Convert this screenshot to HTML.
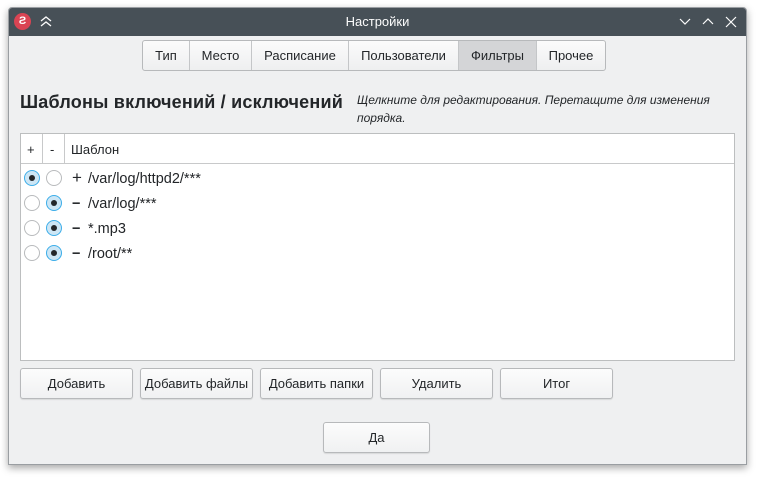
<!DOCTYPE html>
<html><head><meta charset="utf-8"><style>
*{box-sizing:border-box;margin:0;padding:0}
body{width:761px;height:480px;background:#fff;font-family:"Liberation Sans","DejaVu Sans",sans-serif;font-size:13px;color:#232629;position:relative;overflow:hidden}
.win{position:absolute;left:8px;top:7px;width:739px;height:458px;background:#eff0f1;border:1px solid #9a9ea2;box-shadow:0 3px 8px rgba(0,0,0,.35);border-radius:4px 4px 0 0;overflow:hidden}
.tb{position:absolute;left:0;top:0;width:100%;height:28px;background:#475057;color:#fcfcfc;text-align:center;line-height:27px;font-size:13px}
.abs{position:absolute}
.tabs{position:absolute;left:133px;top:32px;height:31px;display:flex;border:1px solid #b7b9bb;border-radius:3px;background:linear-gradient(#fbfbfb,#eeeff0)}
.tabs div{border-left:1px solid #c4c6c8;text-align:center;line-height:29px;font-size:13px}
.tabs div:first-child{border-left:none}
.tabs .sel{background:#d4d5d7}
h1{position:absolute;left:11px;top:84px;font-size:18px;font-weight:bold;color:#232629;letter-spacing:0.2px;white-space:nowrap}
.hint{position:absolute;left:348px;top:83px;font-size:12px;font-style:italic;line-height:18px;width:380px}
.tbl{position:absolute;left:11px;top:125px;width:715px;height:228px;background:#fff;border:1px solid #bcbebf}
.hdr{position:absolute;left:0;top:0;width:100%;height:30px;border-bottom:1px solid #c8c9ca}
.vl{position:absolute;top:0;height:30px;width:1px;background:#c8c9ca}
.rad{position:absolute;width:16px;height:16px;border-radius:50%;border:1px solid #b9bbbd;background:#fff}
.rad.on{background:#cde6f5;border-color:#3daee9}
.rad.on:after{content:"";position:absolute;left:4px;top:4px;width:6px;height:6px;border-radius:50%;background:#232629}
.row{position:absolute;left:51px;font-size:14.5px}
.sg{display:inline-block;width:16px;font-weight:normal}
.btn{position:absolute;height:31px;border:1px solid #b7b9bb;border-radius:3px;background:linear-gradient(#fcfcfc,#f0f1f2);text-align:center;line-height:29px;font-size:13px;box-shadow:0 1px 1px rgba(0,0,0,.1)}
</style></head><body>
<div class="win">
<div class="tb">Настройки
<div class="abs" style="left:5px;top:5px;width:17px;height:17px;border-radius:50%;background:#da4453;color:#fff;font-size:11px;line-height:17px;font-weight:bold">Ƨ</div>
<svg class="abs" style="left:31px;top:7px" width="12" height="12"><path d="M1 6l5-4 5 4M1 11l5-4 5 4" stroke="#fcfcfc" fill="none" stroke-width="1.3"/></svg>
<svg class="abs" style="left:670px;top:8px" width="60" height="12"><path d="M1 3l5 5 5-5M24 8l5-5 5 5M47 1l10 10M57 1l-10 10" stroke="#fcfcfc" fill="none" stroke-width="1.2"/></svg>
</div>
<div class="tabs"><div style="width:46px">Тип</div><div style="width:62px">Место</div><div style="width:97px">Расписание</div><div style="width:110px">Пользователи</div><div class="sel" style="width:78px">Фильтры</div><div style="width:69px">Прочее</div></div>
<h1>Шаблоны включений / исключений</h1>
<div class="hint">Щелкните для редактирования. Перетащите для изменения порядка.</div>
<div class="tbl">
<div class="hdr"><div class="vl" style="left:21px"></div><div class="vl" style="left:43px"></div>
<span class="abs" style="left:6px;top:8px">+</span><span class="abs" style="left:29px;top:8px">-</span><span class="abs" style="left:50px;top:8px">Шаблон</span></div>
<div class="rad on" style="left:3px;top:36px"></div><div class="rad" style="left:25px;top:36px"></div><div class="row" style="top:37px"><span class="sg" style="font-size:17px;line-height:14px">+</span>/var/log/httpd2/***</div>
<div class="rad" style="left:3px;top:61px"></div><div class="rad on" style="left:25px;top:61px"></div><div class="row" style="top:62px"><span class="sg"><b>−</b></span>/var/log/***</div>
<div class="rad" style="left:3px;top:86px"></div><div class="rad on" style="left:25px;top:86px"></div><div class="row" style="top:87px"><span class="sg"><b>−</b></span>*.mp3</div>
<div class="rad" style="left:3px;top:111px"></div><div class="rad on" style="left:25px;top:111px"></div><div class="row" style="top:112px"><span class="sg"><b>−</b></span>/root/**</div>
</div>
<div class="btn" style="left:11px;top:360px;width:113px">Добавить</div>
<div class="btn" style="left:131px;top:360px;width:113px">Добавить файлы</div>
<div class="btn" style="left:251px;top:360px;width:113px">Добавить папки</div>
<div class="btn" style="left:371px;top:360px;width:113px">Удалить</div>
<div class="btn" style="left:491px;top:360px;width:113px">Итог</div>
<div class="btn" style="left:314px;top:414px;width:107px">Да</div>
</div>
</body></html>
